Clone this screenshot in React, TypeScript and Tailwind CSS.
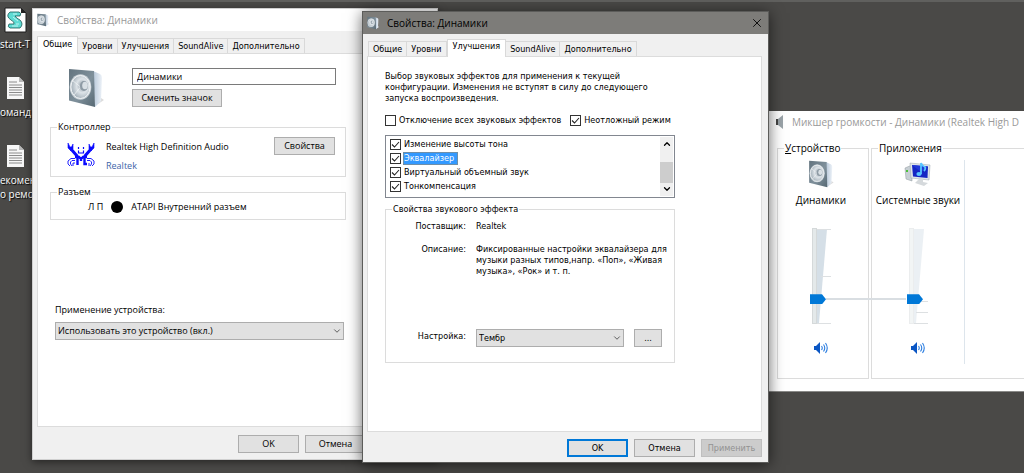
import clsx from 'clsx'
import { ChevronDown, ChevronUp, X } from 'lucide-react'
import { useId, useState, type ReactNode } from 'react'

const TABS = ['Общие', 'Уровни', 'Улучшения', 'SoundAlive', 'Дополнительно']

const EFFECTS = ['Изменение высоты тона', 'Эквалайзер', 'Виртуальный объемный звук', 'Тонкомпенсация']

const segoe = "font-['Open_Sans','Noto_Sans',sans-serif]"
const tahoma = "font-['DejaVu_Sans_Condensed','DejaVu_Sans',sans-serif]"

const SpeakerIcon = ({ className }: { className?: string }) => {
  const id = useId()
  return (
    <svg viewBox="0 0 36 40" className={className} aria-hidden="true">
      <defs>
        <linearGradient id={`${id}f`} x1="0" y1="0" x2="1" y2="1">
          <stop offset="0" stopColor="#63747f" />
          <stop offset="0.55" stopColor="#7f909b" />
          <stop offset="1" stopColor="#566873" />
        </linearGradient>
        <linearGradient id={`${id}s`} x1="0" y1="0" x2="1" y2="0">
          <stop offset="0" stopColor="#b5c6d8" />
          <stop offset="1" stopColor="#edf2f8" />
        </linearGradient>
        <radialGradient id={`${id}c`} cx="0.6" cy="0.45" r="0.6">
          <stop offset="0" stopColor="#8b98a2" />
          <stop offset="0.5" stopColor="#dde3e8" />
          <stop offset="1" stopColor="#a4b0b9" />
        </radialGradient>
      </defs>
      <path d="M27 38 L36 32 L33 30 Z" fill="#dcdcdc" />
      <path d="M25 3 L32 6 Q34 7 34 10 L33 33 L27 39 Z" fill={`url(#${id}s)`} />
      <path d="M1 1 L26 3 L27 39 L1 32.500 Z" fill={`url(#${id}f)`} />
      <ellipse cx="12.500" cy="19" rx="10.800" ry="12.800" fill="#c9d1d7" />
      <ellipse cx="12.500" cy="19" rx="9.600" ry="11.500" fill={`url(#${id}c)`} stroke="#f2f5f7" strokeWidth="1" />
      <path d="M12.500 19 L4 12 M12.500 19 L6 27" stroke="#f4f6f8" strokeWidth="0.700" />
      <ellipse cx="16" cy="18" rx="4" ry="5" fill="#8d9aa4" />
      <ellipse cx="17" cy="17.500" rx="2.800" ry="3.800" fill="#d9e0e5" />
    </svg>
  )
}

const CrabIcon = () => (
  <svg viewBox="0 0 28 24" className="h-6 w-7" fill="none" stroke="#0a0aff" strokeWidth="1.200" aria-hidden="true">
    <path d="M1 0 V5 L4 8 L6 6 V1 L4.500 4 H3 Z M27 0 V5 L24 8 L22 6 V1 L23.500 4 H25 Z" fill="#0a0aff" strokeWidth="0.600" />
    <path d="M4 6 L10.500 13.500 M24 6 L17.500 13.500" strokeWidth="3" />
    <path d="M11.500 4 V6 M16.500 4 V6 M11.500 7.500 V10 H16.500 V7.500" />
    <path d="M8 14 H12 L14 16 L16 14 H20 M10.500 22 V15 M14 15 V18 M17.500 14 V21 H20" strokeWidth="2.400" />
    <path d="M8 15.500 H4 L1 18 V21 L3 23 M8 17.500 H5 L3.500 19 V21 L5 23 M8 20 H6 V23 M20 15.500 H24 L27 18 V21 L25 23 M20 17.500 H23 L24.500 19 V21 L23 23 M22 20 V23" strokeWidth="0.900" />
  </svg>
)

const ScriptIcon = () => (
  <svg viewBox="0 0 24 26" className="h-[26px] w-6" aria-hidden="true">
    <path d="M1 1 H17 L22 6 V25 H1 Z" fill="#fff" stroke="#1c1c1c" strokeWidth="1" />
    <path d="M17 1 L22 6 H17 Z" fill="#222" />
    <path d="M6 5 H15 Q18 6 16 9 H11 Q12 11 16 13 Q20 17 16 21 H6 Q3 20 5 17 H10 Q11 15 7 13 Q1 9 6 5 Z" fill="#5edbd3" stroke="#1d5a58" strokeWidth="0.800" />
    <path d="M9 7 H13 M9 10 L14 14 M8 19 H14 M12 17 H15" stroke="#e8ffff" strokeWidth="0.700" />
  </svg>
)

const DocumentIcon = () => (
  <svg viewBox="0 0 18 24" className="h-6 w-[18px]" aria-hidden="true">
    <path d="M0 1 H12 L17 6 V23 H0 Z" fill="#f7f7f7" />
    <path d="M12 1 V6 H17 Z" fill="#b9b9b9" />
    <path d="M2 6 H10 M2 9 H15 M2 11.500 H15 M2 14 H15 M2 16.500 H15 M2 19 H15" stroke="#8c8c8c" strokeWidth="1" />
  </svg>
)

const ComputerIcon = () => (
  <svg viewBox="0 0 28 26" className="h-[26px] w-7" aria-hidden="true">
    <path d="M1 7 L8 4 V20 L2 18 Z" fill="#c7cfd4" stroke="#8f989e" strokeWidth="0.500" />
    <rect x="2" y="9" width="2" height="2" fill="#4cbf3a" />
    <path d="M6 2 L26 4 L25 19 L7 17 Z" fill="#e0e6ea" stroke="#9aa5ad" strokeWidth="0.500" />
    <path d="M8 4 L24 5.500 L23.500 17 L9 15.500 Z" fill="#1526c4" />
    <path d="M8 4 L24 5.500 L17 11 Z" fill="#2038d8" />
    <path d="M15 18 L19 18.500 V21 L24 22 L20 25 L11 22 Z" fill="#d5d9dc" />
    <path d="M17 13 V2 Q18 5 21 6 Q22 8 20 10" fill="none" stroke="#58c4ff" strokeWidth="1.800" />
    <ellipse cx="15" cy="13" rx="2.600" ry="2" fill="#58c4ff" />
  </svg>
)

const SoundIcon = () => (
  <svg viewBox="0 0 14 12" className="h-3 w-3.5" aria-hidden="true">
    <path d="M0 4 H2 L6 0 V12 L2 8 H0 Z" fill="#0a56c4" />
    <path d="M7.500 4 Q9 6 7.500 8 M9.500 2.500 Q12 6 9.500 9.500 M11.500 1 Q15 6 11.500 11" fill="none" stroke="#2b7de0" strokeWidth="1.100" />
  </svg>
)

const Button = ({ children, className, primary, disabled }: { children: ReactNode; className?: string; primary?: boolean; disabled?: boolean }) => (
  <button
    type="button"
    disabled={disabled}
    className={clsx(
      'flex h-[18px] shrink-0 items-center justify-center',
      disabled ? 'border border-[#bfbfbf] bg-[#cccccc] text-[#929292]' : 'bg-[#e1e1e1]',
      !disabled && (primary ? 'border-2 border-[#0078d7]' : 'border border-[#adadad]'),
      className
    )}
  >
    {children}
  </button>
)

const Select = ({ id, option, className }: { id: string; option: string; className?: string }) => (
  <div className={clsx('relative', className)}>
    <select id={id} className="block h-[18px] w-full appearance-none border border-[#adadad] bg-[#e1e1e1] px-0.5">
      <option>{option}</option>
    </select>
    <ChevronDown className="pointer-events-none absolute top-1 right-0.5 h-2.5 w-2.5 text-[#444]" />
  </div>
)

const Checkbox = ({ label, defaultChecked, selected }: { label: string; defaultChecked?: boolean; selected?: boolean }) => (
  <label className="flex items-center gap-0.5">
    <span className="grid shrink-0">
      <input
        type="checkbox"
        defaultChecked={defaultChecked}
        className="peer col-start-1 row-start-1 h-[11px] w-[11px] appearance-none border border-[#333] bg-white"
      />
      <svg viewBox="0 0 11 11" className="pointer-events-none invisible col-start-1 row-start-1 h-[11px] w-[11px] peer-checked:visible" aria-hidden="true">
        <path d="M2 5.500 L4.500 8 L9 3" fill="none" stroke="#222" strokeWidth="1.100" />
      </svg>
    </span>
    <span className={clsx('px-px', selected && 'bg-[#3399ff] pr-1 leading-[13px] text-white outline -outline-offset-1 outline-[#6f8fa8]')}>{label}</span>
  </label>
)

const Group = ({ title, className, children }: { title: ReactNode; className?: string; children: ReactNode }) => (
  <fieldset className={clsx('border border-[#dcdcdc]', className)}>
    <legend className="ml-1.5 h-3 px-px leading-3">{title}</legend>
    {children}
  </fieldset>
)

const Tabs = ({ active }: { active: string }) => {
  const [current, setCurrent] = useState(active)
  return (
    <div role="tablist" className={clsx('flex items-end', tahoma, current !== TABS[0] && 'pl-px')}>
      {TABS.map((tab, index) => (
        <button
          key={tab}
          type="button"
          role="tab"
          aria-selected={tab === current}
          onClick={() => setCurrent(tab)}
          className={clsx(
            'border border-b-0 border-[#d9d9d9]',
            tab === current ? 'relative z-10 -mb-px h-[18px] bg-white px-[5px] pb-1' : 'h-[15px] bg-[#f0f0f0] px-1',
            tab !== current && index > 0 && 'border-l-0'
          )}
        >
          {tab}
        </button>
      ))}
    </div>
  )
}

const GeneralWindow = () => (
  <section className={clsx('absolute top-2 left-8 w-[406px] border border-[#d0d0d0] bg-[#f0f0f0] text-[9px] leading-3 text-black shadow-[0_2px_8px_rgba(0,0,0,0.5)]', segoe)}>
    <header className="flex h-[22px] items-center gap-2 bg-white pl-1 text-[10px] text-[#999]">
      <SpeakerIcon className="h-3.5 w-3" />
      <h1>Свойства: Динамики</h1>
    </header>
    <div className="pt-[5px] pr-1 pb-1.5 pl-1">
      <Tabs active="Общие" />
      <div className="border border-[#dcdcdc] bg-white pt-3.5 pr-[86px] pb-[86px] pl-3">
        <div className="flex pl-[18px]">
          <SpeakerIcon className="h-10 w-9" />
          <div className="ml-7 flex flex-1 flex-col items-start gap-1 pr-2.5">
            <input aria-label="Имя устройства" defaultValue="Динамики" className="h-[17px] w-full border border-[#7a7a7a] bg-white px-1" />
            <Button className="w-[90px]">Сменить значок</Button>
          </div>
        </div>
        <Group title="Контроллер" className="mt-[13px] pb-px">
          <div className="flex items-start pt-1 pr-2.5 pl-4">
            <div className="mt-1.5">
              <CrabIcon />
            </div>
            <div className="ml-[11px] flex-1 leading-[19px]">
              <p>Realtek High Definition Audio</p>
              <a href="#realtek" className="text-[#3d64a8]">Realtek</a>
            </div>
            <Button className="w-[61px]">Свойства</Button>
          </div>
        </Group>
        <Group title="Разъем" className="mt-[9px]">
          <div className="flex items-center gap-2 pt-[3px] pb-1.5 pl-[37px]">
            <span>Л П</span>
            <span className="h-3 w-3 rounded-full bg-black" />
            <span>ATAPI Внутренний разъем</span>
          </div>
        </Group>
        <div className="mt-[84px] pr-0.5 pl-[5px]">
          <label htmlFor="usage">Применение устройства:</label>
          <Select id="usage" option="Использовать это устройство (вкл.)" className="mt-1.5" />
        </div>
      </div>
      <footer className="mt-2 flex justify-end gap-1.5">
        <Button className="w-[61px]">OK</Button>
        <Button className="w-[61px]">Отмена</Button>
        <Button className="w-[61px]" disabled>Применить</Button>
      </footer>
    </div>
  </section>
)

const EnhancementsWindow = () => (
  <section className={clsx('absolute top-[11px] left-[362px] z-20 w-[407px] border border-[#5c5c5a] bg-[#f0f0f0] text-[9px] leading-[11px] text-black shadow-[0_2px_14px_rgba(0,0,0,0.6)]', tahoma)}>
    <header className={clsx('flex h-[22px] items-center gap-2 bg-[#7d7c79] pr-1 pl-1 text-[10px]', segoe)}>
      <SpeakerIcon className="h-3.5 w-3" />
      <h1 className="flex-1">Свойства: Динамики</h1>
      <button type="button" aria-label="Закрыть">
        <X className="h-3.5 w-3.5" strokeWidth={1.5} />
      </button>
    </header>
    <div className="pt-[5px] pr-1.5 pb-[5px] pl-1">
      <Tabs active="Улучшения" />
      <div className="border border-[#dcdcdc] bg-white pt-3.5 pr-[86px] pb-[68px] pl-[17px]">
        <p>
          Выбор звуковых эффектов для применения к текущей
          <br />
          конфигурации. Изменения не вступят в силу до следующего
          <br />
          запуска воспроизведения.
        </p>
        <div className="mt-[11px] flex gap-2 whitespace-nowrap">
          <Checkbox label="Отключение всех звуковых эффектов" />
          <Checkbox label="Неотложный режим" defaultChecked />
        </div>
        <div className="mt-[9px] flex justify-between border border-[#828790] p-px">
          <ul className="pb-[3px] pl-[3px]">
            {EFFECTS.map(effect => (
              <li key={effect} className="flex h-3.5 items-center">
                <Checkbox label={effect} defaultChecked selected={effect === 'Эквалайзер'} />
              </li>
            ))}
          </ul>
          <div className="flex w-[13px] flex-col items-center justify-between bg-[#f0f0f0] py-0.5">
            <ChevronUp className="h-2.5 w-2.5" strokeWidth={3} />
            <div className="mt-3 h-[21px] w-full bg-[#cdcdcd]" />
            <ChevronDown className="h-2.5 w-2.5" strokeWidth={3} />
          </div>
        </div>
        <Group title="Свойства звукового эффекта" className="mt-[5px] pb-[15px]">
          <dl className="grid grid-cols-[80px_1fr] gap-x-2.5 gap-y-3 pt-1.5">
            <dt className="text-right">Поставщик:</dt>
            <dd>Realtek</dd>
            <dt className="text-right">Описание:</dt>
            <dd className="whitespace-nowrap">
              Фиксированные настройки эквалайзера для
              <br />
              музыки разных типов,напр. «Поп», «Живая
              <br />
              музыка», «Рок» и т. п.
            </dd>
          </dl>
          <div className="mt-[52px] grid grid-cols-[80px_1fr_28px] gap-x-2.5 pr-3">
            <label htmlFor="preset" className="pt-0.5 text-right">Настройка:</label>
            <Select id="preset" option="Тембр" />
            <Button>...</Button>
          </div>
        </Group>
      </div>
      <footer className="mt-[7px] flex justify-end gap-1.5">
        <Button className="w-[61px]" primary>OK</Button>
        <Button className="w-[61px]">Отмена</Button>
        <Button className="w-[61px]" disabled>Применить</Button>
      </footer>
    </div>
  </section>
)

const VolumeSlider = ({ label, faded }: { label: string; faded?: boolean }) => (
  <div className="relative h-24 w-[22px]">
    <svg viewBox="0 0 22 96" className="absolute inset-0 h-24 w-[22px]" aria-hidden="true">
      <g opacity={faded ? 0.45 : 1}>
        <rect x="2.500" y="0.500" width="4" height="95" fill="#e4e9ea" stroke="#d5d9da" />
        <path d="M7 1 H17 L9 95 H7 Z" fill="#d5dfe7" />
      </g>
      <path d={faded ? 'M9 73.500 H21 M9 84.500 H21 M7 95.500 H21' : 'M7 1.500 H21 M11 48.500 H21 M7 95.500 H21'} stroke="#dde0e2" />
    </svg>
    <input
      type="range"
      aria-label={label}
      defaultValue={23}
      className="absolute top-0 left-0 h-24 w-4 appearance-none bg-transparent [direction:rtl] [writing-mode:vertical-lr] [&::-webkit-slider-thumb]:h-2.5 [&::-webkit-slider-thumb]:w-4 [&::-webkit-slider-thumb]:appearance-none [&::-webkit-slider-thumb]:bg-[#0078d7] [&::-webkit-slider-thumb]:[clip-path:polygon(0_0,75%_0,100%_50%,75%_100%,0_100%)]"
    />
  </div>
)

const Channel = ({ icon, name, faded }: { icon: ReactNode; name: string; faded?: boolean }) => (
  <div className="flex flex-col items-center">
    {icon}
    <span className="mt-1.5 whitespace-nowrap">{name}</span>
    <div className="mt-[22px]">
      <VolumeSlider label={name} faded={faded} />
    </div>
    <button type="button" aria-label="Отключить звук" className="mt-[18px]">
      <SoundIcon />
    </button>
  </div>
)

const MixerWindow = () => (
  <section className={clsx('absolute top-[111px] right-0 left-[768px] z-10 overflow-hidden border-b border-[#8a8a88] bg-white text-[10px] leading-3 text-black', segoe)}>
    <header className="flex h-[22px] items-center gap-2 pl-2 text-[#999]">
      <svg viewBox="0 0 8 14" className="h-3.5 w-2 shrink-0" aria-hidden="true">
        <path d="M0 4 H2 V10 H0 Z" fill="#444" />
        <path d="M2 4 L7 0 V14 L2 10 Z" fill="#9aa3a8" />
      </svg>
      <h1 className="whitespace-nowrap">Микшер громкости - Динамики (Realtek High D</h1>
    </header>
    <div className="flex gap-0.5 pt-[9px] pb-3 pl-[9px]">
      <Group title={<><u>У</u>стройство</>} className="w-[92px] shrink-0 pb-6">
        <div className="relative pt-1.5 pr-1">
          <Channel icon={<SpeakerIcon className="h-7 w-[26px]" />} name="Динамики" />
          <div className="absolute top-[144px] left-12 z-10 h-0.5 w-20 bg-[#d9dee2]" />
        </div>
      </Group>
      <Group title="Приложения" className="flex-1 border-r-0 pb-[13px]">
        <div className="flex pt-1.5">
          <div className="w-[93px] border-r border-[#dde5ec] pb-2.5">
            <Channel icon={<div className="flex h-7 items-center"><ComputerIcon /></div>} name="Системные звуки" faded />
          </div>
        </div>
      </Group>
    </div>
  </section>
)

const DesktopItem = ({ icon, label }: { icon: ReactNode; label: ReactNode }) => (
  <li className="h-[68px] w-9">
    <div className="flex h-7 w-8 items-center justify-center">{icon}</div>
    <p className="mt-[3px] whitespace-nowrap">{label}</p>
  </li>
)

const App = () => (
  <main className="relative min-h-screen overflow-hidden bg-[#4a4947]">
    <div className="h-0.5 bg-[#60605e]" />
    <ul className={clsx('pt-1 text-[10px] leading-3.5 text-white [text-shadow:1px_1px_1px_#000]', segoe)}>
      <DesktopItem icon={<ScriptIcon />} label="start-T" />
      <DesktopItem icon={<DocumentIcon />} label="оманд" />
      <DesktopItem icon={<DocumentIcon />} label={<>екомен<br />о ремо</>} />
    </ul>
    <GeneralWindow />
    <MixerWindow />
    <EnhancementsWindow />
  </main>
)

export default App
